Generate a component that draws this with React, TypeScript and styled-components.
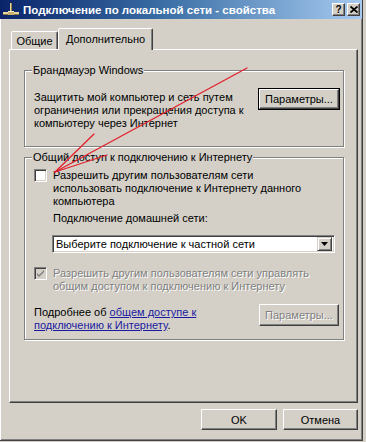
import styled, { createGlobalStyle, css } from "styled-components";

const GlobalStyle = createGlobalStyle`
  html, body {
    margin: 0;
    padding: 0;
    background: #d4d0c8;
  }
  body {
    font-family: "Liberation Sans", Arial, sans-serif;
    font-size: 11px;
    color: #000;
  }
`;

const Window = styled.div`
  position: relative;
  width: 362px;
  height: 440px;
  background: #d4d0c8;
  border-right: 1px solid #404040;
  border-bottom: 1px solid #404040;
  box-shadow: inset 1px 0 #fff, inset -1px -1px #808080;
  display: flex;
  flex-direction: column;
  overflow: hidden;
`;

const TitleBar = styled.div`
  height: 19px;
  display: flex;
  align-items: center;
  padding: 0 2px 0 3px;
  background: linear-gradient(90deg, #0a246a 0%, #3a6ea5 45%, #a6caf0 100%);
`;

const TitleText = styled.span`
  margin-left: 4px;
  color: #fff;
  font-weight: bold;
  font-size: 11.5px;
  white-space: nowrap;
`;

const CaptionButtons = styled.div`
  margin-left: auto;
  display: flex;
  gap: 2px;
`;

const CaptionButton = styled.div`
  width: 13px;
  height: 13px;
  box-sizing: border-box;
  background: #d4d0c8;
  border: 1px solid;
  border-color: #fff #404040 #404040 #fff;
  box-shadow: inset -1px -1px #808080;
  display: flex;
  align-items: center;
  justify-content: center;
  font-weight: bold;
  font-size: 10px;
  line-height: 1;
`;

const Body = styled.div`
  flex: 1;
  display: flex;
  flex-direction: column;
  padding: 9px 4px 0 9px;
`;

const TabRow = styled.div`
  display: flex;
  align-items: flex-end;
  height: 21px;
  padding-left: 2px;
  position: relative;
  z-index: 1;
`;

const Tab = styled.div<{ $active?: boolean; $width: number }>`
  width: ${({ $width }) => $width}px;
  height: ${({ $active }) => ($active ? 22 : 18)}px;
  margin-bottom: ${({ $active }) => ($active ? -1 : 0)}px;
  box-sizing: border-box;
  background: #d4d0c8;
  border: 1px solid;
  border-bottom: none;
  border-color: #fff #404040 transparent #fff;
  border-radius: 2px 2px 0 0;
  box-shadow: inset -1px 0 #808080;
  display: flex;
  align-items: center;
  justify-content: center;
  padding-bottom: ${({ $active }) => ($active ? 2 : 0)}px;
  white-space: nowrap;
`;

const Panel = styled.div`
  width: 349px;
  height: 354px;
  box-sizing: border-box;
  border: 1px solid;
  border-color: #fff #404040 #404040 #fff;
  box-shadow: inset -1px -1px #808080;
  padding: 20px 13px 0 14px;
  display: flex;
  flex-direction: column;
  gap: 10px;
`;

const GroupBox = styled.div<{ $pad: string }>`
  position: relative;
  border: 1px solid #808080;
  box-shadow: inset 1px 1px #fff, 1px 1px #fff;
  padding: ${({ $pad }) => $pad};
`;

const Legend = styled.span`
  position: absolute;
  top: -7px;
  left: 7px;
  padding: 0 1px;
  line-height: 13px;
  background: #d4d0c8;
  white-space: nowrap;
`;

const Row = styled.div<{ $top?: number }>`
  display: flex;
  justify-content: space-between;
  align-items: flex-start;
  margin-top: ${({ $top }) => $top ?? 0}px;
`;

const CheckRow = styled.div<{ $top?: number }>`
  display: flex;
  align-items: flex-start;
  gap: 6px;
  margin-top: ${({ $top }) => $top ?? 0}px;
`;

const Text = styled.div<{ $top?: number; $disabled?: boolean }>`
  line-height: 13px;
  margin-top: ${({ $top }) => $top ?? 0}px;
  white-space: nowrap;
  ${({ $disabled }) =>
    $disabled &&
    css`
      color: #808080;
      text-shadow: 1px 1px #fff;
    `}
`;

const Indent = styled.div`
  margin-left: 19px;
  display: flex;
  flex-direction: column;
`;

const Button = styled.div<{
  $width: number;
  $height?: number;
  $default?: boolean;
  $disabled?: boolean;
}>`
  width: ${({ $width }) => $width}px;
  height: ${({ $height }) => $height ?? 21}px;
  box-sizing: border-box;
  flex-shrink: 0;
  background: #d4d0c8;
  border: 1px solid;
  border-color: #fff #404040 #404040 #fff;
  box-shadow: inset -1px -1px #808080;
  display: flex;
  align-items: center;
  justify-content: center;
  white-space: nowrap;
  ${({ $default }) =>
    $default &&
    css`
      outline: 1px solid #000;
    `}
  ${({ $disabled }) =>
    $disabled &&
    css`
      color: #808080;
      text-shadow: 1px 1px #fff;
    `}
`;

const CheckBox = styled.span<{ $disabled?: boolean }>`
  width: 13px;
  height: 13px;
  flex-shrink: 0;
  box-sizing: border-box;
  border: 1px solid;
  border-color: #808080 #fff #fff #808080;
  box-shadow: inset 1px 1px #404040, inset -1px -1px #d4d0c8;
  background: ${({ $disabled }) => ($disabled ? "#d4d0c8" : "#fff")};
  display: flex;
  align-items: center;
  justify-content: center;
`;

const Combo = styled.div`
  width: 283px;
  height: 18px;
  margin: 10px 0 0 -1px;
  box-sizing: border-box;
  border: 1px solid;
  border-color: #808080 #fff #fff #808080;
  box-shadow: inset 1px 1px #404040, inset -1px -1px #d4d0c8;
  background: #fff;
  display: flex;
  align-items: center;
  padding: 2px 2px 2px 3px;
`;

const ComboText = styled.span`
  flex: 1;
  white-space: nowrap;
`;

const ComboArrow = styled.span`
  width: 15px;
  height: 14px;
  box-sizing: border-box;
  background: #d4d0c8;
  border: 1px solid;
  border-color: #d4d0c8 #404040 #404040 #d4d0c8;
  box-shadow: inset 1px 1px #fff, inset -1px -1px #808080;
  display: flex;
  align-items: center;
  justify-content: center;
`;

const Link = styled.a`
  color: #1a1aa0;
  text-decoration: underline;
`;

const Footer = styled.div`
  display: flex;
  justify-content: flex-end;
  gap: 6px;
  padding-top: 6px;
`;

const Annotation = styled.svg`
  position: absolute;
  left: 0;
  top: 0;
  pointer-events: none;
  z-index: 5;
`;

const ConnectionIcon = () => (
  <svg width="16" height="15" viewBox="0 0 16 15">
    <rect x="7" y="1" width="2" height="10" fill="#e8d8a0" />
    <rect x="8" y="1" width="1" height="10" fill="#a08848" />
    <rect x="0" y="10" width="16" height="2" fill="#e8d8a0" />
    <rect x="0" y="12" width="16" height="1" fill="#8c7440" />
    <rect x="5" y="9" width="6" height="4" fill="#c8b070" />
    <rect x="5" y="9" width="6" height="1" fill="#f4ecc8" />
  </svg>
);

const Check = ({ color }: { color: string }) => (
  <svg width="9" height="9" viewBox="0 0 9 9">
    <path d="M1 4 L3 6 L8 1 L8 3 L3 8 L1 6 Z" fill={color} />
  </svg>
);

export default function App() {
  return (
    <>
      <GlobalStyle />
      <Window>
        <TitleBar>
          <ConnectionIcon />
          <TitleText>Подключение по локальной сети - свойства</TitleText>
          <CaptionButtons>
            <CaptionButton>?</CaptionButton>
            <CaptionButton>
              <svg width="8" height="7" viewBox="0 0 8 7">
                <path d="M0.5 0.5 L7.5 6.5 M7.5 0.5 L0.5 6.5" stroke="#000" strokeWidth="1.8" />
              </svg>
            </CaptionButton>
          </CaptionButtons>
        </TitleBar>

        <Body>
          <TabRow>
            <Tab $width={47}>Общие</Tab>
            <Tab $active $width={95}>
              Дополнительно
            </Tab>
          </TabRow>

          <Panel>
            <GroupBox $pad="18px 4px 16px 9px">
              <Legend>Брандмауэр Windows</Legend>
              <Row>
                <Text $top={2}>
                  Защитить мой компьютер и сеть путем
                  <br />
                  ограничения или прекращения доступа к
                  <br />
                  компьютеру через Интернет
                </Text>
                <Button $width={80} $height={20} $default>
                  Параметры...
                </Button>
              </Row>
            </GroupBox>

            <GroupBox $pad="11px 4px 7px 9px">
              <Legend>Общий доступ к подключению к Интернету</Legend>
              <CheckRow>
                <CheckBox />
                <Text>
                  Разрешить другим пользователям сети
                  <br />
                  использовать подключение к Интернету данного
                  <br />
                  компьютера
                </Text>
              </CheckRow>
              <Indent>
                <Text $top={4}>Подключение домашней сети:</Text>
                <Combo>
                  <ComboText>Выберите подключение к частной сети</ComboText>
                  <ComboArrow>
                    <svg width="7" height="4" viewBox="0 0 7 4">
                      <path d="M0 0 H7 L3.5 4 Z" fill="#000" />
                    </svg>
                  </ComboArrow>
                </Combo>
              </Indent>
              <CheckRow $top={14}>
                <CheckBox $disabled>
                  <Check color="#808080" />
                </CheckBox>
                <Text $disabled>
                  Разрешить другим пользователям сети управлять
                  <br />
                  общим доступом к подключению к Интернету
                </Text>
              </CheckRow>
              <Row $top={11}>
                <Text $top={2}>
                  Подробнее об <Link>общем доступе к</Link>
                  <br />
                  <Link>подключению к Интернету</Link>.
                </Text>
                <Button $width={80} $height={22} $disabled>
                  Параметры...
                </Button>
              </Row>
            </GroupBox>
          </Panel>

          <Footer>
            <Button $width={76}>OK</Button>
            <Button $width={75}>Отмена</Button>
          </Footer>
        </Body>

        <Annotation width="366" height="442" viewBox="0 0 366 442">
          <g stroke="#e3202c" strokeWidth="1.3" strokeLinecap="round" fill="none">
            <path d="M247 68 L55 172" />
            <path d="M94 134 L55 172" />
            <path d="M107 155 L55 172" />
          </g>
        </Annotation>
      </Window>
    </>
  );
}
